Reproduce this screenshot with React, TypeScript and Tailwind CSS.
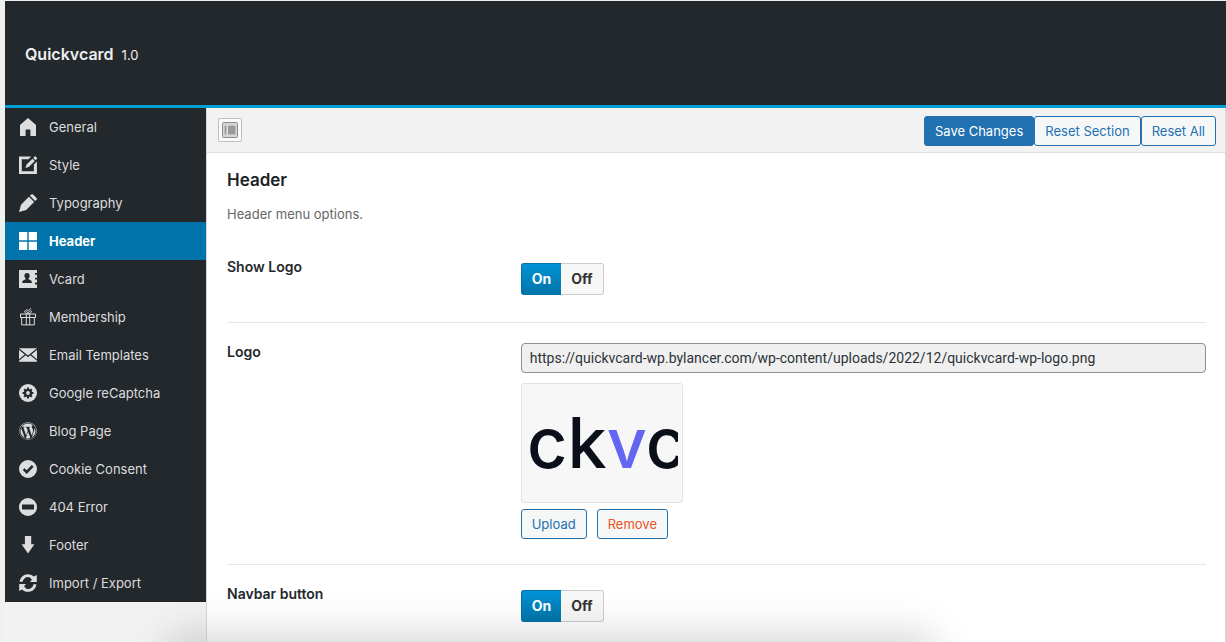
import React, { useState } from "react";
import { FaWordpress } from "react-icons/fa";

const GeneralIcon = () => (
  <svg viewBox="0 0 18 18" className="size-[18px]" fill="currentColor">
    <path d="M9 0 1 7v11h5.6v-6.6h4.8V18H17V7z" />
  </svg>
);

const StyleIcon = () => (
  <svg viewBox="0 0 18 18" className="size-[18px]" fill="currentColor">
    <path d="M0 .6h12.2L9.6 3.2H2.8v12h12.1V8.4l3-3V18H0z" />
    <path d="M6.5 12 7.4 8.7 13.4 2.7 15.8 5.1 9.8 11.1z" />
    <path d="m14.2 1.9 1.3-1.3q.6-.5 1.2 0l1.1 1.1q.5.6 0 1.2l-1.3 1.3z" />
  </svg>
);

const TypographyIcon = () => (
  <svg viewBox="0 0 18 18" className="size-[18px]" fill="currentColor">
    <path d="m2 10.7 7.9-7.9 5.2 5.2-7.9 7.9L0 18z" />
    <path d="m10.9 1.8 1.4-1.3q.8-.8 1.7 0l3.6 3.6q.7.8 0 1.6L16.1 7z" />
  </svg>
);

const HeaderIcon = () => (
  <svg viewBox="0 0 18 18" className="size-[18px]" fill="currentColor">
    <path d="M0 0h8.300v8.300H0zM9.700 0H18v8.300H9.700zM0 9.700h8.300V18H0zM9.700 9.700H18V18H9.700z" />
  </svg>
);

const VcardIcon = () => (
  <svg viewBox="0 0 18 18" className="size-[18px]" fill="currentColor" fillRule="evenodd">
    <path d="M0 0h18v3h-2v1.800h2v3h-2v1.800h2v3h-2v1.800h2V18H0zM8 3C6.300 3 5.300 4.200 5.400 5.900c.1 1.200.6 2 1.200 2.500v.8c-.3.500-2.800.9-3.100 2.100L3.200 13h9.700l-.3-1.700c-.3-1.200-2.800-1.600-3.100-2.100v-.8c.6-.5 1.100-1.300 1.200-2.500C10.800 4.200 9.700 3 8 3z" />
  </svg>
);

const MembershipIcon = () => (
  <svg viewBox="0 0 18 18" className="size-[18px]" fill="none" stroke="currentColor">
    <path d="M1.500 6h15v3.500h-15zM2.700 9.500h12.600v7.400H2.700zM7.300 6v11M10.700 6v11" strokeWidth="1" />
    <path d="M9 5.700C6.800 5.500 5 4.200 5.600 3.100S8.500 3.200 9 5.700C9.500 3.200 11.900 2 12.400 3.100S11.200 5.500 9 5.700zM8.600 3C8 2.200 7.500 1.500 8 .9M9.400 2.800C10 1.500 11 .4 12.200.8" strokeWidth=".9" />
  </svg>
);

const EmailIcon = () => (
  <svg viewBox="0 0 18 18" className="size-[18px]" fill="currentColor">
    <path d="M0 2.200h18L9 9.500zM0 3.900l5.700 4.600L0 13.200zM18 3.900v9.300l-5.700-4.700zM6.700 9.300 9 11.200l2.300-1.900 6.700 5.500v1H0v-1z" />
  </svg>
);

const CaptchaIcon = () => (
  <svg viewBox="0 0 18 18" className="size-[18px]">
    <circle cx="9" cy="9" r="9" fill="currentColor" />
    <circle cx="9" cy="9" r="3" fill="none" stroke="#23282d" strokeWidth="2.2" />
    <path d="M9 3.600v1.900M9 12.500v1.900M3.600 9h1.900M12.500 9h1.900M5.200 5.200l1.300 1.300M11.500 11.500l1.300 1.300M12.800 5.200l-1.300 1.300M6.500 11.500l-1.300 1.300" stroke="#23282d" strokeWidth="2" />
  </svg>
);

const CheckIcon = () => (
  <svg viewBox="0 0 18 18" className="size-[18px]">
    <circle cx="9" cy="9" r="9" fill="currentColor" />
    <path d="m4.700 9.200 3 3 6-6.300" fill="none" stroke="#23282d" strokeWidth="2.6" />
  </svg>
);

const ErrorIcon = () => (
  <svg viewBox="0 0 18 18" className="size-[18px]">
    <circle cx="9" cy="9" r="9" fill="currentColor" />
    <path d="M3 6.500h12v5H3z" fill="#23282d" />
  </svg>
);

const FooterIcon = () => (
  <svg viewBox="0 0 18 18" className="size-[18px]" fill="currentColor">
    <path d="M5.900 0h6.300v8.300h3.200L9 17.600 2.600 8.300h3.300z" />
  </svg>
);

const ImportIcon = () => (
  <svg viewBox="0 0 18 18" className="size-[18px]" fill="currentColor">
    <path d="M.6 7.800C1.200 3.200 4.700.2 9 .2c2.400 0 4.400.9 5.900 2.400L17.800.9v7.200h-7l2.100-2.100C11.900 4 10.600 2.900 9 2.900c-2.600 0-5 2.100-5.500 4.900z" />
    <path d="M17.400 10.200c-.6 4.600-4.100 7.600-8.400 7.600-2.400 0-4.400-.9-5.900-2.400L.2 17.100V9.900h7l-2.100 2.100c1 2 2.300 3.100 3.900 3.100 2.600 0 5-2.100 5.500-4.900z" />
  </svg>
);

const menu = [
  { title: "General", icon: <GeneralIcon /> },
  { title: "Style", icon: <StyleIcon /> },
  { title: "Typography", icon: <TypographyIcon /> },
  { title: "Header", icon: <HeaderIcon /> },
  { title: "Vcard", icon: <VcardIcon /> },
  { title: "Membership", icon: <MembershipIcon /> },
  { title: "Email Templates", icon: <EmailIcon /> },
  { title: "Google reCaptcha", icon: <CaptchaIcon /> },
  { title: "Blog Page", icon: <FaWordpress className="size-[18px]" /> },
  { title: "Cookie Consent", icon: <CheckIcon /> },
  { title: "404 Error", icon: <ErrorIcon /> },
  { title: "Footer", icon: <FooterIcon /> },
  { title: "Import / Export", icon: <ImportIcon /> },
];

const Switch = ({ labelledBy }: { labelledBy: string }) => {
  const [on, setOn] = useState(true);
  const base = "h-8 border px-[10px] text-sm font-bold";
  const active = "border-[#0070a6] bg-linear-to-b from-[#0093d6] to-[#0074a8] text-white";
  const idle = "border-[#cccccc] bg-[#f7f7f7] text-[#333333]";

  return (
    <div role="group" aria-labelledby={labelledBy} className="mt-[5px] mb-[2px] flex">
      <button type="button" aria-pressed={on} onClick={() => setOn(true)} className={`${base} rounded-l-[3px] border-r-0 ${on ? active : idle}`}>
        On
      </button>
      <button type="button" aria-pressed={!on} onClick={() => setOn(false)} className={`${base} rounded-r-[3px] border-l-0 ${on ? idle : active}`}>
        Off
      </button>
    </div>
  );
};

const Field = ({ id, title, htmlFor, children }: { id: string; title: string; htmlFor?: string; children: React.ReactNode }) => (
  <div className="flex border-b border-[#e7e7e7] pt-5 pb-[25px] last:border-b-0">
    <div className="w-[30%] shrink-0 text-sm leading-[18px] font-semibold text-[#23282d]">
      {htmlFor ? <label id={id} htmlFor={htmlFor}>{title}</label> : <span id={id}>{title}</span>}
    </div>
    <div className="min-w-0 flex-1">{children}</div>
  </div>
);

const buttonClass = "h-[30px] rounded-[3px] border border-[#2271b1] px-[10px] pt-[2px]";

const App = () => {
  const [current, setCurrent] = useState("Header");
  const [logo, setLogo] = useState("https://quickvcard-wp.bylancer.com/wp-content/uploads/2022/12/quickvcard-wp-logo.png");

  return (
    <div className="min-h-screen bg-[#f0f0f1] pt-px pl-[5px] font-['Inter','Liberation_Sans',sans-serif] text-[13px]">
      <header className="flex h-[107px] items-baseline gap-2 border-b-3 border-[#00a0d2] bg-[#23282d] px-5 pt-[41px] text-[#eeeeee]">
        <h1 className="text-base font-semibold">Quickvcard</h1>
        <span>1.0</span>
      </header>

      <div className="flex min-h-[calc(100vh-108px)] bg-[#f2f2f2]">
        <nav className="w-[201px] shrink-0">
          <ul className="bg-[#23282d]">
            {menu.map((item) => (
              <li key={item.title}>
                <a
                  href="#"
                  onClick={() => setCurrent(item.title)}
                  className={`flex h-[38px] items-center gap-3 px-[14px] ${current === item.title ? "bg-[#0073aa] font-bold text-white" : "text-[#dddddd]"}`}
                >
                  {item.icon}
                  <span className="pt-[2px]">{item.title}</span>
                </a>
              </li>
            ))}
          </ul>
        </nav>

        <main className="min-w-0 flex-1 border-x border-[#d8d8d8] bg-white">
          <div className="flex h-[45px] items-center justify-between border-b border-[#dedede] bg-[#f2f2f2] pr-[9px] pl-[11px]">
            <button type="button" aria-label="Expand options" className="grid size-6 place-items-center rounded-xs border border-[#c0c0c0] bg-[#fafafa]">
              <svg viewBox="0 0 16 16" className="size-4">
                <rect x=".5" y=".5" width="15" height="15" rx="1" fill="#d5d5d5" stroke="#8c8c8c" />
                <path d="M2 3h12v10H2z" fill="#e4e4e4" />
                <path d="M2.500 3.500h2v9h-2zM6 3.500h7.500v9H6z" fill="#999999" />
              </svg>
            </button>
            <div className="flex pt-[2px]">
              <button type="button" className={`${buttonClass} bg-[#2271b1] text-white`}>
                Save Changes
              </button>
              <button type="button" className={`${buttonClass} bg-[#f6f7f7] text-[#2271b1]`}>
                Reset Section
              </button>
              <button type="button" className={`${buttonClass} bg-[#f6f7f7] text-[#2271b1]`}>
                Reset All
              </button>
            </div>
          </div>

          <section className="pt-[15px] pr-[19px] pl-5">
            <h2 className="text-[17px] leading-6 font-semibold text-[#1d2327]">Header</h2>
            <p className="mt-3 mb-[14px] leading-5 text-[#666666]">Header menu options.</p>

            <Field id="show-logo" title="Show Logo">
              <Switch labelledBy="show-logo" />
            </Field>

            <Field id="logo" title="Logo" htmlFor="logo-url">
              <input
                id="logo-url"
                type="text"
                readOnly
                value={logo}
                className="block h-[30px] w-full rounded-[4px] border border-[#8c8f94] bg-[#f0f0f1] px-2 font-['Roboto','Liberation_Sans',sans-serif] text-sm text-[#2c3338]"
              />
              {logo && (
                <div className="mt-[10px] h-[120px] w-[162px] rounded-[3px] border border-[#e3e3e3] bg-[#f7f7f7] p-1">
                  <svg viewBox="0 0 152 110" className="h-full w-full overflow-hidden" role="img" aria-label="Logo">
                    <text x="1" y="80" fontSize="70" fontWeight="500" fill="#0b0f19">
                      ck<tspan fill="#6366f1">v</tspan>c
                    </text>
                  </svg>
                </div>
              )}
              <div className="mt-[6px] flex gap-[10px]">
                <button type="button" className={`${buttonClass} bg-[#f6f7f7] text-[#2271b1]`}>
                  Upload
                </button>
                <button type="button" onClick={() => setLogo("")} className={`${buttonClass} bg-[#f6f7f7] text-[#ef521d]`}>
                  Remove
                </button>
              </div>
            </Field>

            <Field id="navbar-button" title="Navbar button">
              <Switch labelledBy="navbar-button" />
            </Field>
          </section>
        </main>
      </div>

      {/* soft shade along the bottom of the window */}
      <div className="pointer-events-none fixed top-full right-[24%] left-[14%] h-10 rounded-3xl shadow-[0_0_40px_8px_rgba(0,0,0,0.17)]" />
    </div>
  );
};

export default App;
